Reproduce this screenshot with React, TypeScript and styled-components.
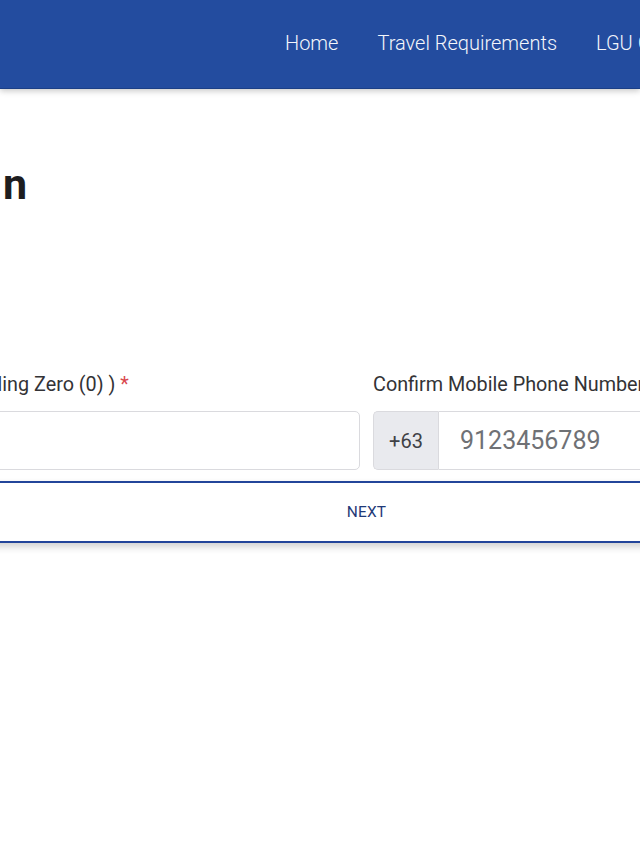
import React from "react";
import styled, { createGlobalStyle } from "styled-components";

const GlobalStyle = createGlobalStyle`
  html, body {
    margin: 0;
    padding: 0;
    background: #ffffff;
    overflow: hidden;
  }
  body {
    font-family: Roboto, "Liberation Sans", Arial, sans-serif;
  }
  * { box-sizing: border-box; }
`;

const Page = styled.div`
  width: 100vw;
  min-height: 100vh;
  overflow: hidden;
  background: #fff;
`;

const Header = styled.header`
  height: 89px;
  background: #234c9f;
  border-bottom: 1px solid #1b3f86;
  box-shadow: 0 2px 6px rgba(0, 0, 0, 0.22);
  display: flex;
  align-items: center;
  padding-left: 285px;
  position: relative;
  z-index: 1;
`;

const Nav = styled.nav`
  display: flex;
  gap: 39px;
  white-space: nowrap;
`;

const NavLink = styled.a`
  color: #f4f6fb;
  font-size: 20px;
  font-weight: 300;
  text-decoration: none;
  margin-top: -2px;
`;

const Main = styled.main`
  padding-top: 70px;
`;

const TitleRow = styled.div`
  display: flex;
  justify-content: flex-end;
  width: 30px;
  white-space: nowrap;
`;

const Title = styled.h1`
  margin: 0;
  font-size: 43px;
  line-height: 50px;
  font-weight: 700;
  letter-spacing: 3px;
  color: #1d1d1f;
`;

const Form = styled.form`
  margin-top: 162px;
  margin-left: -327px;
  display: grid;
  grid-template-columns: 687px 687px;
  column-gap: 13px;
`;

const Field = styled.div`
  display: flex;
  flex-direction: column;
`;

const Label = styled.label`
  font-size: 19.8px;
  line-height: 28.5px;
  color: #333336;
  white-space: nowrap;
  margin-bottom: 11.5px;
`;

const Required = styled.span`
  color: #d9474e;
`;

const InputGroup = styled.div`
  display: flex;
  height: 59px;
`;

const Prefix = styled.span`
  width: 65px;
  display: flex;
  align-items: center;
  justify-content: center;
  background: #e9eaee;
  border: 1px solid #dadade;
  border-right: none;
  border-radius: 5px 0 0 5px;
  font-size: 20px;
  color: #3f4145;
`;

const Input = styled.input<{ $joined?: boolean }>`
  flex: 1;
  min-width: 0;
  height: 100%;
  border: 1px solid #dadade;
  border-radius: ${(p) => (p.$joined ? "0 5px 5px 0" : "5px")};
  padding: 0 0 0 21px;
  font-family: Roboto, "Liberation Sans", Arial, sans-serif;
  font-size: 25px;
  color: #333;
  background: #fff;
  outline: none;
  &::placeholder {
    color: #6f7175;
  }
`;

const NextButton = styled.button`
  grid-column: 1 / -1;
  margin-top: 11px;
  height: 62px;
  background: #fff;
  border: none;
  border-top: 2px solid #23459a;
  border-bottom: 2px solid #23459a;
  box-shadow: 0 4px 7px rgba(0, 0, 0, 0.18);
  font-family: Roboto, "Liberation Sans", Arial, sans-serif;
  font-size: 15.5px;
  letter-spacing: 0.2px;
  color: #1f3a78;
  cursor: pointer;
`;

export default function App() {
  return (
    <Page>
      <GlobalStyle />
      <Header>
        <Nav>
          <NavLink href="#">Home</NavLink>
          <NavLink href="#">Travel Requirements</NavLink>
          <NavLink href="#">LGU Guidelines</NavLink>
        </Nav>
      </Header>
      <Main>
        <TitleRow>
          <Title>Registration</Title>
        </TitleRow>
        <Form onSubmit={(e) => e.preventDefault()}>
          <Field>
            <Label>
              Mobile Phone Number ( Without Leading Zero (0) ) <Required>*</Required>
            </Label>
            <InputGroup>
              <Input type="text" />
            </InputGroup>
          </Field>
          <Field>
            <Label>
              Confirm Mobile Phone Number <Required>*</Required>
            </Label>
            <InputGroup>
              <Prefix>+63</Prefix>
              <Input $joined type="text" placeholder="9123456789" />
            </InputGroup>
          </Field>
          <NextButton type="submit">NEXT</NextButton>
        </Form>
      </Main>
    </Page>
  );
}
